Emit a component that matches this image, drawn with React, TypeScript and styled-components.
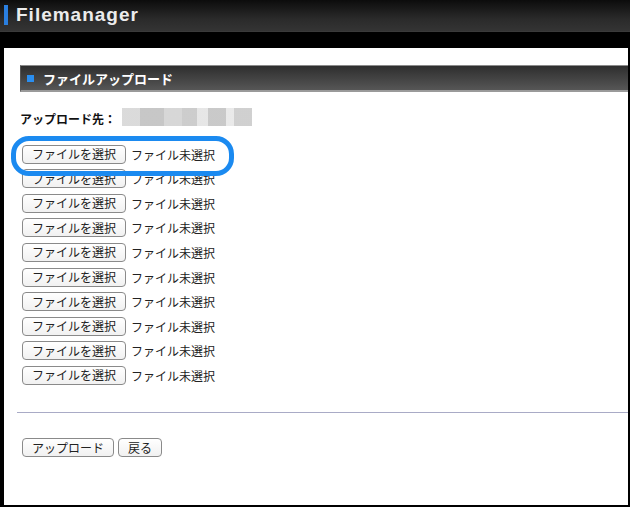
import styled, { createGlobalStyle } from 'styled-components';

const GlobalStyle = createGlobalStyle`
  html, body {
    margin: 0;
    padding: 0;
    background: #000;
  }
  body {
    font-family: "Noto Sans CJK JP", "Liberation Sans", sans-serif;
    color: #111;
  }
`;

const JP = '"Noto Sans CJK JP", "Noto Sans", sans-serif';

const rows = Array.from({ length: 10 }, (_, i) => i);

const App: React.FC = () => (
  <>
    <GlobalStyle />
    <Page>
      <Header>
        <HeaderMark />
        <HeaderTitle>Filemanager</HeaderTitle>
      </Header>
      <Band />
      <Content>
        <SectionBar>
          <SectionMark />
          <SectionTitle>ファイルアップロード</SectionTitle>
        </SectionBar>
        <Dest>
          <DestLabel>アップロード先：</DestLabel>
          <Blurred />
        </Dest>
        <Files>
          <Ring />
          {rows.map((i) => (
            <FileRow key={i}>
              <Btn>ファイルを選択</Btn>
              <NoFile>ファイル未選択</NoFile>
            </FileRow>
          ))}
        </Files>
        <Rule />
        <Actions>
          <Btn>アップロード</Btn>
          <Btn>戻る</Btn>
        </Actions>
      </Content>
    </Page>
  </>
);

const Page = styled.div`
  width: 630px;
  height: 507px;
  background: #000;
  display: flex;
  flex-direction: column;
  overflow: hidden;
`;

const Header = styled.header`
  height: 32px;
  display: flex;
  align-items: center;
  background: linear-gradient(#0c0c0c, #2a2a2a 60%, #343434);
  border-bottom: 1px solid #3a3a3a;
  box-sizing: border-box;
`;

const HeaderMark = styled.span`
  width: 4px;
  height: 20px;
  margin-left: 4px;
  background: #2a7fe0;
  margin-top: -2px;
`;

const HeaderTitle = styled.h1`
  margin: -3px 0 0 8px;
  font-family: "Liberation Sans", "DejaVu Sans", sans-serif;
  font-size: 19px;
  font-weight: 700;
  letter-spacing: 1px;
  color: #ececec;
  line-height: 1;
`;

const Band = styled.div`
  height: 16px;
  background: #000;
`;

const Content = styled.main`
  flex: 1;
  margin: 0 2px 2px 4px;
  background: #fff;
  padding: 17px 0 0 16px;
  position: relative;
`;

const SectionBar = styled.div`
  height: 27px;
  box-sizing: border-box;
  display: flex;
  align-items: center;
  background: linear-gradient(#2e2e2e, #4a4a4a 70%, #565656);
  border-top: 1px solid #8a8a8a;
  border-bottom: 2px solid #9a9a9a;
  border-left: 1px solid #555;
`;

const SectionMark = styled.span`
  width: 7px;
  height: 7px;
  background: #2a8ef0;
  margin-left: 6px;
`;

const SectionTitle = styled.h2`
  margin: 0 0 0 9px;
  font-family: ${JP};
  font-size: 13px;
  font-weight: 700;
  color: #fff;
  line-height: 1;
`;

const Dest = styled.div`
  display: flex;
  align-items: center;
  margin-top: 16px;
  height: 20px;
`;

const DestLabel = styled.span`
  font-family: ${JP};
  font-size: 12px;
  font-weight: 700;
  color: #111;
`;

const Blurred = styled.span`
  width: 130px;
  height: 18px;
  margin-left: 6px;
  margin-top: -2px;
  background: linear-gradient(
    90deg,
    #d4d4d4 0 14%,
    #bdbdbd 14% 32%,
    #d0d0d0 32% 46%,
    #c4c4c4 46% 58%,
    #e2e2e2 58% 66%,
    #c0c0c0 66% 80%,
    #e6e6e6 80% 86%,
    #c8c8c8 86% 100%
  );
  opacity: 0.85;
`;

const Files = styled.div`
  position: relative;
  margin-top: 14px;
  display: flex;
  flex-direction: column;
`;

const Ring = styled.div`
  position: absolute;
  left: -9px;
  top: -6px;
  width: 223px;
  height: 40px;
  box-sizing: border-box;
  border: 5px solid #1b8af0;
  border-radius: 18px;
  pointer-events: none;
  z-index: 2;
`;

const FileRow = styled.div`
  height: 24.56px;
  display: flex;
  align-items: center;
  gap: 5px;
  padding-left: 2px;
`;

const Btn = styled.button`
  height: 19px;
  padding: 0 9px;
  border: 1px solid #8a8a8a;
  border-radius: 4px;
  background: linear-gradient(#ffffff, #f1f1f1);
  font-family: ${JP};
  font-size: 12px;
  line-height: 1;
  color: #222;
  display: flex;
  align-items: center;
  white-space: pre;
  cursor: pointer;
`;

const NoFile = styled.span`
  font-family: ${JP};
  font-size: 12px;
  color: #222;
`;

const Rule = styled.hr`
  margin: 25px 0 0 -3px;
  border: none;
  height: 1px;
  background: #a9abc6;
`;

const Actions = styled.div`
  display: flex;
  gap: 4px;
  margin-top: 25px;
  padding-left: 2px;
`;

export default App;
